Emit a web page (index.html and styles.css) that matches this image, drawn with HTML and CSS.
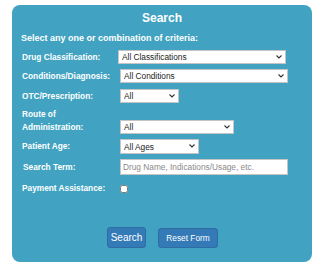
FILE: index.html
```html
<html>
	<head>
		<title>Search</title>
		<link rel="stylesheet" href="styles.css">
	</head>
	<body>
		<div class="searchPanel">
			<h2 class="searchTitle">Search</h2>
			<p class="criteria">Select any one or combination of criteria:</p>
			<form class="searchForm" onsubmit="return false;">
				<div class="formRow">
					<label class="fieldLabel" for="drugClass">Drug Classification:</label>
					<span class="selectWrap fieldShift">
						<select id="drugClass" class="field fieldWide">
							<option>All Classifications</option>
						</select>
						<svg class="chevron" width="6" height="4" viewBox="0 0 6 4"><path d="M0.5 0.5 L3 3 L5.5 0.5" fill="none" stroke="#333" stroke-width="1.1"/></svg>
					</span>
				</div>
				<div class="formRow">
					<label class="fieldLabel" for="conditions">Conditions/Diagnosis:</label>
					<span class="selectWrap">
						<select id="conditions" class="field fieldWide">
							<option>All Conditions</option>
						</select>
						<svg class="chevron" width="6" height="4" viewBox="0 0 6 4"><path d="M0.5 0.5 L3 3 L5.5 0.5" fill="none" stroke="#333" stroke-width="1.1"/></svg>
					</span>
				</div>
				<div class="formRow rowOtc">
					<label class="fieldLabel" for="otc">OTC/Prescription:</label>
					<span class="selectWrap">
						<select id="otc" class="field fieldSmall">
							<option>All</option>
						</select>
						<svg class="chevron" width="6" height="4" viewBox="0 0 6 4"><path d="M0.5 0.5 L3 3 L5.5 0.5" fill="none" stroke="#333" stroke-width="1.1"/></svg>
					</span>
				</div>
				<div class="formRow rowTall">
					<label class="fieldLabel" for="route">Route of<br>Administration:</label>
					<span class="selectWrap">
						<select id="route" class="field fieldMid">
							<option>All</option>
						</select>
						<svg class="chevron" width="6" height="4" viewBox="0 0 6 4"><path d="M0.5 0.5 L3 3 L5.5 0.5" fill="none" stroke="#333" stroke-width="1.1"/></svg>
					</span>
				</div>
				<div class="formRow">
					<label class="fieldLabel" for="age">Patient Age:</label>
					<span class="selectWrap">
						<select id="age" class="field fieldAge">
							<option>All Ages</option>
						</select>
						<svg class="chevron" width="6" height="4" viewBox="0 0 6 4"><path d="M0.5 0.5 L3 3 L5.5 0.5" fill="none" stroke="#333" stroke-width="1.1"/></svg>
					</span>
				</div>
				<div class="formRow">
					<label class="fieldLabel labelShift" for="term">Search Term:</label>
					<input id="term" class="field fieldWide fieldText" type="text" placeholder="Drug Name, Indications/Usage, etc.">
				</div>
				<div class="formRow rowCheck">
					<label class="fieldLabel" for="assist">Payment Assistance:</label>
					<input id="assist" class="checkBox" type="checkbox">
				</div>
				<div class="buttonRow">
					<button class="btn btnSearch" type="submit">Search</button>
					<button class="btn btnReset" type="reset">Reset Form</button>
				</div>
			</form>
		</div>
	</body>
</html>
```

FILE: styles.css
```css
body {
    margin: 0;
    background: #fff;
    font-family: "Liberation Sans", Arial, sans-serif;
}
.searchPanel {
    margin: 5px 0 0 12px;
    width: 300px;
    height: 257px;
    box-sizing: border-box;
    padding: 5px 10px 0 10px;
    background: #41a3c1;
    border-radius: 8px;
    color: #fff;
}
.searchTitle {
    margin: 0;
    font-size: 12px;
    line-height: 16px;
    text-align: center;
}
.criteria {
    margin: 6px 0 0 -1px;
    font-size: 9px;
    font-weight: bold;
    line-height: 12px;
}
.searchForm {
    display: flex;
    flex-direction: column;
    gap: 5px;
    margin-top: 6px;
}
.formRow {
    display: flex;
    align-items: center;
}
.rowOtc {
    margin-top: 1px;
}
.rowTall {
    align-items: flex-end;
}
.fieldLabel {
    width: 98px;
    flex: none;
    font-size: 8.3px;
    font-weight: bold;
    line-height: 13px;
}
.labelShift {
    padding-left: 1px;
    width: 97px;
}
.selectWrap {
    position: relative;
    display: flex;
}
.fieldShift {
    margin-left: -2px;
}
.chevron {
    position: absolute;
    right: 4px;
    top: 5px;
    pointer-events: none;
}
.field {
    box-sizing: border-box;
    height: 14px;
    margin: 0;
    padding: 0 0 0 3px;
    font-family: "Liberation Sans", Arial, sans-serif;
    font-size: 8.3px;
    color: #222;
    background: #fff;
    border: 1px solid #c4c4c4;
    border-radius: 0;
    appearance: none;
    -webkit-appearance: none;
}
.fieldWide {
    width: 168px;
}
.fieldSmall {
    width: 59px;
}
.fieldMid {
    width: 114px;
}
.fieldAge {
    width: 79px;
    height: 15px;
}
.fieldText {
    height: 16px;
    padding-left: 2px;
}
.fieldText::placeholder {
    color: #8a8a8a;
}
.rowCheck {
    margin-top: 2px;
}
.checkBox {
    width: 8px;
    height: 8px;
    margin: 0;
}
.buttonRow {
    display: flex;
    justify-content: center;
    align-items: center;
    gap: 12px;
    margin-top: 27px;
    padding-left: 1px;
}
.btn {
    box-sizing: border-box;
    margin: 0;
    color: #fff;
    background: #337ab7;
    border: 1px solid #2e6da4;
    border-radius: 3px;
    font-family: "Liberation Sans", Arial, sans-serif;
}
.btnSearch {
    width: 39px;
    height: 21px;
    padding: 0;
    font-size: 10px;
}
.btnReset {
    width: 60px;
    height: 20px;
    padding: 0;
    font-size: 8.3px;
}
```
